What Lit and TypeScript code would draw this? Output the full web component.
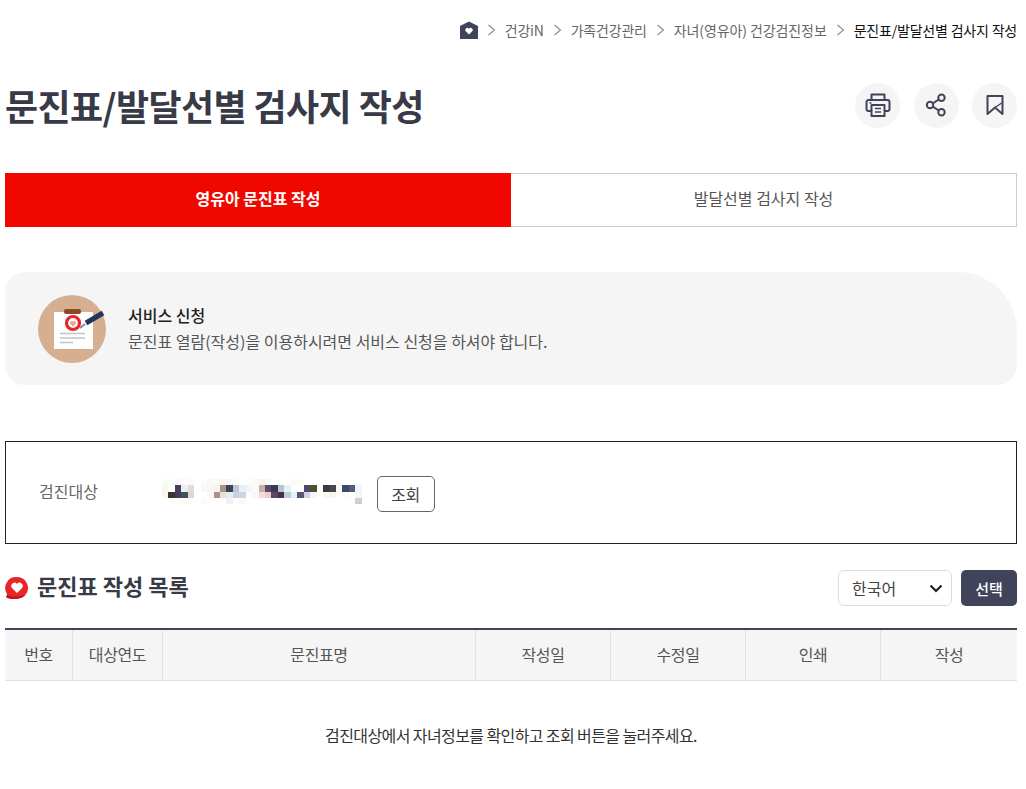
import { LitElement, html, css } from "lit";
import { customElement } from "lit/decorators.js";

const pix: string[][] = [
  "f8fcf4 fdfdfb fbf8fc fefafc fdf8fa F fdfdff fbf8f4 fffcf0 fbf4f0 f4f8f4 fafcf8 F fafffc f9fbf2 fdf0ea f0fcfe F F F f8fcf0 fcfff0 F F F F F F F F F".split(" "),
  "f5f9ee F 4a3b60 e8f0f4 e3dcd6 F f8f8fc f8f6fa f8f3ee a89488 384450 c0c4d4 e8eefa eef5fc fafafa c0b0b0 5a4a68 383850 b8c4d0 e0f4fa F F 50486a 50502e F 383c40 48484c fcfcf4 3a4870 585a70 e8f8fc".split(" "),
  "f8f8f0 3c3424 4a3a60 3c5060 dcd8d0 F F f8f8fa b09080 e8e0d8 e4ecf4 c8d0e4 ccd4e8 F f8f8f8 f8d8d4 e4d0cc 5a4860 4c2c50 c0ccd4 dcf4fa 5c5870 d0d4e4 f4f8fa F fafaf0 f4f8ec F fafcfc F f0f8fa".split(" "),
  "F fcfcf8 fdfdf8 fafaf6 fcfcfa F fafaff F F F f0f0f0 F f8f8f8 F F F F F F F F F F F F F F F F F d0d0d0".split(" "),
];

@customElement("app-root")
export class AppRoot extends LitElement {
  static styles = css`
    :host {
      display: block;
      box-sizing: border-box;
      width: 1026px;
      height: 789px;
      overflow: hidden;
      padding: 0 9px 0 5px;
      background: #fff;
      font-family: "Noto Sans CJK KR", "Noto Sans", sans-serif;
      color: #333;
    }
    * { box-sizing: border-box; }
    .crumbs {
      height: 60px;
      display: flex;
      align-items: center;
      justify-content: flex-end;
      font-size: 14px;
      color: #666;
      gap: 9px;
      letter-spacing: -0.2px;
    }
    .crumbs .cur { color: #111; }
    .crumbs .wide { letter-spacing: -0.1px; }
    .crumbs svg { display: block; }
    .title-row {
      height: 92px;
      display: flex;
      align-items: center;
      justify-content: space-between;
    }
    h1 {
      margin: 0;
      font-size: 36px;
      font-weight: 700;
      color: #383a47;
      letter-spacing: -0.6px;
      line-height: 1.2;
    }
    .tools { display: flex; gap: 13.5px; margin-top: -2px; }
    .tool {
      width: 45px;
      height: 45px;
      border-radius: 50%;
      background: #f5f5f5;
      display: flex;
      align-items: center;
      justify-content: center;
    }
    .tabs {
      margin-top: 21px;
      display: grid;
      grid-template-columns: 506px 506px;
      height: 54px;
    }
    .tab {
      display: flex;
      align-items: center;
      justify-content: center;
      font-size: 16px;
      font-weight: 400;
      color: #555;
      border: 1px solid #ccc;
      border-left: 0;
      padding-bottom: 4px;
    }
    .tab.on {
      background: #f00800;
      color: #fff;
      font-weight: 700;
      border: 0;
    }
    .notice {
      margin-top: 45px;
      height: 113px;
      background: #f5f5f5;
      border-radius: 20px 60px 20px 20px;
      display: flex;
      align-items: center;
      gap: 22px;
      padding-left: 33px;
    }
    .notice svg { display: block; }
    .notice .t { font-size: 16px; font-weight: 500; color: #222; line-height: 25px; }
    .notice .d { font-size: 16px; color: #555; line-height: 27px; }
    .search {
      margin-top: 56px;
      height: 103px;
      border: 1px solid #222;
      display: flex;
      align-items: center;
      padding-left: 33px;
      font-size: 16px;
      color: #666;
    }
    .search .lbl { width: 123px; margin-top: -3px; }
    .pix {
      display: grid;
      grid-template-columns: repeat(31, 6.45px);
      grid-auto-rows: 6.4px;
      margin-right: 15px;
      margin-top: -2px;
    }
    .btn {
      width: 58px;
      height: 36px;
      border: 1px solid #666;
      border-radius: 5px;
      display: flex;
      align-items: center;
      justify-content: center;
      color: #444;
      margin-top: 2px;
      letter-spacing: -0.4px;
    }
    .head {
      margin-top: 26px;
      height: 36px;
      display: flex;
      align-items: center;
      justify-content: space-between;
    }
    .head .l { display: flex; align-items: center; gap: 8px; }
    h2 {
      margin: -6px 0 0;
      font-size: 22px;
      font-weight: 700;
      color: #383a47;
    }
    .head .r { display: flex; gap: 9px; }
    .sel {
      width: 114px;
      height: 36px;
      border: 1px solid #ddd;
      border-radius: 6px;
      display: flex;
      align-items: center;
      justify-content: space-between;
      padding: 0 8px 0 13px;
      font-size: 16px;
      color: #444;
    }
    .go {
      width: 56px;
      height: 36px;
      border-radius: 5px;
      background: #41435a;
      color: #fff;
      display: flex;
      align-items: center;
      justify-content: center;
      font-size: 15px;
      font-weight: 500;
    }
    table {
      margin-top: 22px;
      width: 1012px;
      border-collapse: separate;
      border-spacing: 0;
      table-layout: fixed;
      border-top: 2px solid #41435a;
    }
    th {
      height: 51px;
      padding: 0 0 2px;
      background: #f5f5f5;
      border-bottom: 1px solid #e2e2e2;
      border-right: 1px solid #e2e2e2;
      font-size: 16px;
      font-weight: 400;
      color: #555;
      letter-spacing: -0.4px;
    }
    th:last-child { border-right: 0; }
    td {
      height: 108px;
      padding: 0;
      text-align: center;
      font-size: 16px;
      letter-spacing: -0.6px;
      color: #333;
    }
  `;

  render() {
    const chev = html`<svg width="9" height="12" viewBox="0 0 9 12" fill="none" stroke="#888" stroke-width="1.1"><path d="M1.5 1l6 5-6 5"/></svg>`;
    return html`
      <div class="crumbs">
        <svg width="18" height="18" viewBox="0 0 18 18">
          <path d="M9 .5L18 5V18H0V5Z" fill="#41435a"/>
          <path d="M9 13.5L5.5 10a2.1 2.1 0 0 1 3.5-2.3 2.1 2.1 0 0 1 3.5 2.3Z" fill="#fff"/>
        </svg>
        ${chev}<span>건강iN</span>${chev}<span>가족건강관리</span>${chev}<span class="wide">자녀(영유아) 건강검진정보</span>${chev}<span class="cur">문진표/발달선별 검사지 작성</span>
      </div>

      <div class="title-row">
        <h1>문진표/발달선별 검사지 작성</h1>
        <div class="tools">
          <div class="tool">
            <svg width="26" height="26" viewBox="0 0 26 26" fill="none" stroke="#41435a" stroke-width="2" stroke-linejoin="round">
              <path d="M6.5 8V2.5h13V8"/>
              <path d="M6.5 19H3.5a2 2 0 0 1-2-2V10a2 2 0 0 1 2-2h19a2 2 0 0 1 2 2v7a2 2 0 0 1-2 2h-3"/>
              <rect x="6.5" y="13" width="13" height="11"/>
              <path d="M10 16.5h6M10 20h6" stroke-width="1.5"/>
              <path d="M4.5 11h2" stroke-width="1.5"/>
            </svg>
          </div>
          <div class="tool">
            <svg width="22" height="24" viewBox="0 0 22 24" fill="none" stroke="#41435a" stroke-width="2">
              <circle cx="16.5" cy="4.8" r="3.2"/>
              <circle cx="5" cy="12" r="3.2"/>
              <circle cx="16.5" cy="19.2" r="3.2"/>
              <path d="M7.8 10.3l6-3.8M7.8 13.7l6 3.8"/>
            </svg>
          </div>
          <div class="tool">
            <svg width="20" height="22" viewBox="0 0 20 22" fill="none" stroke="#41435a" stroke-width="2" stroke-linejoin="round">
              <path d="M2.5 2h15v18L10 13.5 2.5 20Z"/>
              <path d="M17.5 8.5L10 13.5" stroke-width="1.4"/>
            </svg>
          </div>
        </div>
      </div>

      <div class="tabs">
        <div class="tab on">영유아 문진표 작성</div>
        <div class="tab">발달선별 검사지 작성</div>
      </div>

      <div class="notice">
        <svg width="68" height="68" viewBox="0 0 68 68">
          <circle cx="34" cy="34" r="34" fill="#d6ae90"/>
          <rect x="16" y="17" width="39" height="37" fill="#fff"/>
          <rect x="26" y="14" width="17" height="5" rx="2" fill="#8a4a24"/>
          <circle cx="35" cy="28" r="6.5" fill="none" stroke="#e8262a" stroke-width="3.2"/>
          <path d="M35 31.5l-3-3a1.9 1.9 0 0 1 3-2 1.9 1.9 0 0 1 3 2Z" fill="#f0a0a0"/>
          <path d="M22 38.5h25M22 43h25M22 47.5h13" stroke="#c4c4c8" stroke-width="1.5"/>
          <path d="M48 28l17-10" stroke="#24365e" stroke-width="5"/>
          <path d="M42 33l5-4" stroke="#8a8a90" stroke-width="2"/>
        </svg>
        <div>
          <div class="t">서비스 신청</div>
          <div class="d">문진표 열람(작성)을 이용하시려면 서비스 신청을 하셔야 합니다.</div>
        </div>
      </div>

      <div class="search">
        <div class="lbl">검진대상</div>
        <div class="pix">
          ${pix.flat().map((c) => html`<i style="background:#${c === "F" ? "fff" : c}"></i>`)}
        </div>
        <div class="btn">조회</div>
      </div>

      <div class="head">
        <div class="l">
          <svg width="24" height="24" viewBox="0 0 24 24">
            <path d="M12 1a11 11 0 0 1 8 18.5c-2 2.2-6 3.5-11 3.5-3 0-6-.6-8-2 1-.6 1.4-1.6 1-3A11 11 0 0 1 12 1Z" fill="#e8262a"/>
            <path d="M2 18c1 2.2 5 3 9 2.6 3-.3 6-1 9-1.6-2 2.6-6 4-11 4-3 0-6-.6-8-2 .6-.4 1-1.6 1-3Z" fill="#b8141c"/>
            <path d="M12 17l-5-5a3.2 3.2 0 0 1 5-4 3.2 3.2 0 0 1 5 4Z" fill="#fff"/>
          </svg>
          <h2>문진표 작성 목록</h2>
        </div>
        <div class="r">
          <div class="sel">
            <span>한국어</span>
            <svg width="14" height="10" viewBox="0 0 14 10" fill="none" stroke="#222" stroke-width="2.2"><path d="M1.5 2.5L7 8l5.5-5.5"/></svg>
          </div>
          <div class="go">선택</div>
        </div>
      </div>

      <table>
        <colgroup>
          <col style="width:68px" /><col style="width:90px" /><col style="width:313px" />
          <col style="width:135px" /><col style="width:135px" /><col style="width:135px" /><col />
        </colgroup>
        <thead>
          <tr><th>번호</th><th>대상연도</th><th>문진표명</th><th>작성일</th><th>수정일</th><th>인쇄</th><th>작성</th></tr>
        </thead>
        <tbody>
          <tr><td colspan="7">검진대상에서 자녀정보를 확인하고 조회 버튼을 눌러주세요.</td></tr>
        </tbody>
      </table>
    `;
  }
}
